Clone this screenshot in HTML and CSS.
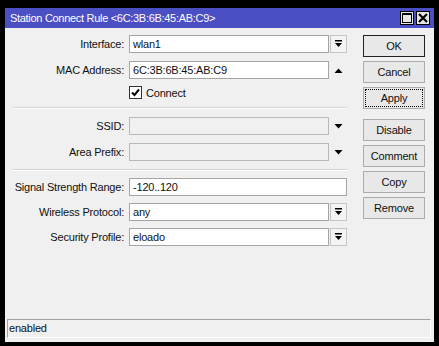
FILE: index.html
```html
<!DOCTYPE html>
<html lang="en">
<head>
    <meta charset="UTF-8">
    <title>Station Connect Rule</title>
    <link rel="stylesheet" href="styles.css">
</head>
<body>
    <div class="window">
        <div class="titlebar">
            <span class="title">Station Connect Rule &lt;6C:3B:6B:45:AB:C9&gt;</span>
            <span class="tb-btn">
                <svg width="12" height="12" viewBox="0 0 12 12"><rect x="1.5" y="1.5" width="9" height="9" fill="none" stroke="#000" stroke-width="1"/><rect x="1" y="1" width="10" height="2" fill="#000"/></svg>
            </span>
            <span class="tb-btn">
                <svg width="12" height="12" viewBox="0 0 12 12"><path d="M2 2 L10 10 M10 2 L2 10" stroke="#000" stroke-width="2.2"/></svg>
            </span>
        </div>

        <div class="content">
            <div class="form">
                <div class="row">
                    <label class="lbl">Interface:</label>
                    <div class="field">wlan1</div>
                    <span class="drop boxed">
                        <svg width="9" height="8" viewBox="0 0 9 8"><rect x="1" y="0" width="7" height="1.5" fill="#000"/><path d="M1 3 L8 3 L4.5 7 Z" fill="#000"/></svg>
                    </span>
                </div>
                <div class="row">
                    <label class="lbl">MAC Address:</label>
                    <div class="field">6C:3B:6B:45:AB:C9</div>
                    <span class="drop">
                        <svg width="9" height="5" viewBox="0 0 9 5"><path d="M0.5 5 L8.5 5 L4.5 0.5 Z" fill="#000"/></svg>
                    </span>
                </div>
                <div class="check-row">
                    <span class="checkbox">
                        <svg width="11" height="11" viewBox="0 0 11 11"><path d="M2 5.5 L4.5 8 L9 2.5" fill="none" stroke="#000" stroke-width="2"/></svg>
                    </span>
                    <span>Connect</span>
                </div>

                <div class="sep"></div>

                <div class="row">
                    <label class="lbl">SSID:</label>
                    <div class="field disabled"></div>
                    <span class="drop">
                        <svg width="9" height="5" viewBox="0 0 9 5"><path d="M0.5 0 L8.5 0 L4.5 4.5 Z" fill="#000"/></svg>
                    </span>
                </div>
                <div class="row">
                    <label class="lbl">Area Prefix:</label>
                    <div class="field disabled"></div>
                    <span class="drop">
                        <svg width="9" height="5" viewBox="0 0 9 5"><path d="M0.5 0 L8.5 0 L4.5 4.5 Z" fill="#000"/></svg>
                    </span>
                </div>

                <div class="sep sep-low"></div>

                <div class="row tight">
                    <label class="lbl">Signal Strength Range:</label>
                    <div class="field wide">-120..120</div>
                </div>
                <div class="row tight">
                    <label class="lbl">Wireless Protocol:</label>
                    <div class="field">any</div>
                    <span class="drop boxed">
                        <svg width="9" height="8" viewBox="0 0 9 8"><rect x="1" y="0" width="7" height="1.5" fill="#000"/><path d="M1 3 L8 3 L4.5 7 Z" fill="#000"/></svg>
                    </span>
                </div>
                <div class="row tight">
                    <label class="lbl">Security Profile:</label>
                    <div class="field">eloado</div>
                    <span class="drop boxed">
                        <svg width="9" height="8" viewBox="0 0 9 8"><rect x="1" y="0" width="7" height="1.5" fill="#000"/><path d="M1 3 L8 3 L4.5 7 Z" fill="#000"/></svg>
                    </span>
                </div>
            </div>

            <div class="buttons">
                <button class="btn default">OK</button>
                <button class="btn">Cancel</button>
                <button class="btn focused">Apply</button>
                <button class="btn">Disable</button>
                <button class="btn">Comment</button>
                <button class="btn">Copy</button>
                <button class="btn">Remove</button>
            </div>
        </div>

        <div class="status">enabled</div>
    </div>
</body>
</html>
```

FILE: styles.css
```css
body {
    margin: 0;
    background: #000;
    font-family: 'Liberation Sans', Arial, sans-serif;
    font-size: 11px;
    letter-spacing: -0.2px;
    color: #111;
}

.window {
    margin: 8px 0 0 5px;
    width: 429px;
    height: 334px;
    background: #f0f0f0;
    display: flex;
    flex-direction: column;
}

.titlebar {
    height: 20px;
    background: #4b4fc4;
    color: #fff;
    display: flex;
    align-items: center;
    padding: 0 4px 0 5px;
}

.title {
    flex: 1;
    font-size: 11px;
    letter-spacing: -0.3px;
}

.tb-btn {
    width: 12px;
    height: 12px;
    margin-left: 2px;
    background: #e6e6e6;
    border: 1px solid #000;
    display: flex;
    align-items: center;
    justify-content: center;
}

.content {
    flex: 1;
    display: flex;
    padding: 7px 0 0 8px;
}

.form {
    width: 334px;
    display: flex;
    flex-direction: column;
}

.row {
    display: flex;
    align-items: center;
    height: 18px;
    margin-bottom: 8px;
}

.row.tight {
    margin-bottom: 7px;
}

.lbl {
    width: 111px;
    margin-right: 5px;
    text-align: right;
    white-space: nowrap;
}

.field {
    box-sizing: border-box;
    width: 200px;
    height: 18px;
    background: #fff;
    border: 1px solid #a5a5a5;
    padding-left: 3px;
    line-height: 16px;
}

.field.disabled {
    background: #f0f0f0;
    border-color: #b9b9b9;
}

.field.wide {
    width: 218px;
}

.drop {
    box-sizing: border-box;
    width: 17px;
    height: 18px;
    margin-left: 1px;
    display: flex;
    align-items: center;
    justify-content: center;
}

.drop.boxed {
    border: 1px solid #c4c4c4;
    background: #f4f4f4;
}

.check-row {
    display: flex;
    align-items: center;
    height: 13px;
    margin: -1px 0 0 116px;
}

.checkbox {
    box-sizing: border-box;
    width: 13px;
    height: 13px;
    border: 1px solid #333;
    background: #fff;
    margin-right: 4px;
    display: flex;
    align-items: center;
    justify-content: center;
}

.sep {
    height: 0;
    border-top: 1px solid #d4d4d4;
    border-bottom: 1px solid #fff;
    margin: 8px 0 8px;
}

.sep.sep-low {
    margin: 0 0 7px;
}

.buttons {
    width: 62px;
    margin-left: 16px;
    display: flex;
    flex-direction: column;
}

.btn {
    box-sizing: border-box;
    width: 62px;
    height: 22px;
    margin-bottom: 4px;
    background: #e8e8e8;
    border: 1px solid #acacac;
    font-family: 'Liberation Sans', Arial, sans-serif;
    font-size: 11px;
    letter-spacing: -0.2px;
    color: #111;
    padding: 0;
}

.btn.default {
    border-color: #222;
}

.btn.focused {
    outline: 1px dotted #000;
    outline-offset: -3px;
    margin-bottom: 10px;
}

.status {
    box-sizing: border-box;
    height: 19px;
    margin: 0 3px 4px 2px;
    border-top: 1px solid #a0a0a0;
    border-left: 1px solid #a0a0a0;
    border-right: 1px solid #fff;
    border-bottom: 1px solid #fff;
    padding-left: 1px;
    line-height: 17px;
}
```
